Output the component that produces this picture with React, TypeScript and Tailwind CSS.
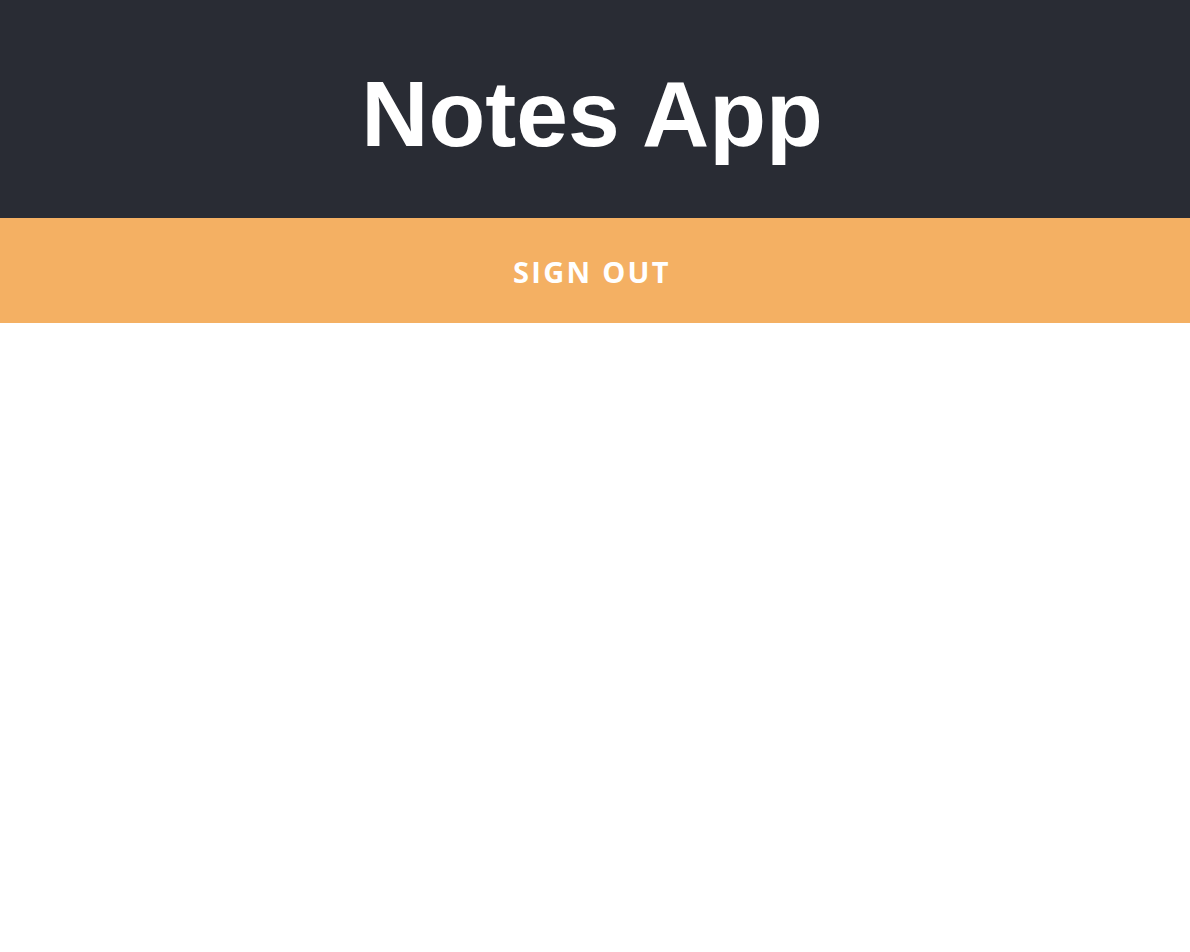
export default function App() {
  return (
    <div className="min-h-screen bg-white">
      {/* Header */}
      <header className="flex h-[218px] items-center justify-center bg-[#292c34]">
        <h1 className="pr-[6px] pt-[10px] text-[93px] font-bold leading-none text-white [font-family:'Liberation_Sans',Arial,sans-serif]">
          Notes App
        </h1>
      </header>

      {/* Sign out bar */}
      <button className="flex h-[105px] w-full items-center justify-center bg-[#f4b063] pr-[6px] pt-[2px]">
        <span className="text-[29px] font-bold uppercase leading-none tracking-[2.3px] text-white [font-family:'Open_Sans',sans-serif]">
          Sign Out
        </span>
      </button>
    </div>
  );
}
